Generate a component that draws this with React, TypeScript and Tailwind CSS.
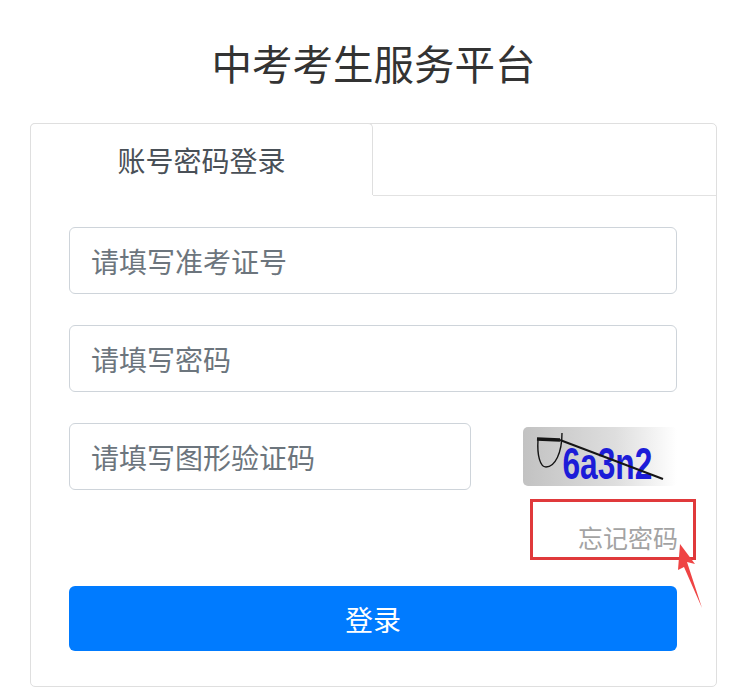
export default function App() {
  return (
    <div className="relative h-[699px] w-[743px] overflow-hidden bg-white font-['Noto_Sans_CJK_SC',sans-serif]">
      <div className="ml-[30px] w-[687px] pt-[35px]">
        <h1 className="h-[88px] text-center text-[40.5px] leading-[56px] font-normal text-[#333333]">
          中考考生服务平台
        </h1>

        <div className="h-[564px] rounded-[5px] border border-[#dfdfdf]">
          <div className="flex h-[72px]">
            <div className="-mt-px -ml-px flex h-[72px] w-[343px] items-center justify-center rounded-t-[5px] border border-b-0 border-[#dfdfdf] bg-white pt-px text-[28px] leading-none text-[#495057]">
              账号密码登录
            </div>
            <div className="flex-1 border-b border-[#e2e2e2]"></div>
          </div>

          <div className="px-[38px] pt-[31px]">
            <div className="flex h-[67px] w-[608px] items-center rounded-[6px] border border-[#ced4da] pl-[21px] text-[28px] text-[#6c757d]">
              请填写准考证号
            </div>
            <div className="mt-[31px] flex h-[67px] w-[608px] items-center rounded-[6px] border border-[#ced4da] pl-[21px] text-[28px] text-[#6c757d]">
              请填写密码
            </div>
            <div className="mt-[31px] flex w-[608px] items-start justify-between">
              <div className="flex h-[67px] w-[402px] items-center rounded-[6px] border border-[#ced4da] pl-[21px] text-[28px] text-[#6c757d]">
                请填写图形验证码
              </div>
              <div className="relative mt-1 flex h-[59px] w-[154px] items-center justify-center overflow-hidden rounded-[5px] bg-gradient-to-r from-[#c2c2c2] via-[#dedede] via-60% to-white">
                <span className="mt-[14px] ml-[15px] font-['Liberation_Sans',sans-serif] text-[44px] leading-none font-bold text-[#1c1cd8] [transform:scaleX(0.72)]">
                  6a3n2
                </span>
                <svg className="absolute inset-0" width="154" height="59" viewBox="0 0 154 59" fill="none" stroke="#151515">
                  <path d="M14 12 L37 13" strokeWidth="3.5" />
                  <path d="M37 13 L140 52" strokeWidth="2" />
                  <path d="M15 13 C14 28 17 40 23 40 C32 40 39 26 39 6" strokeWidth="1.4" />
                </svg>
              </div>
            </div>
            <div className="mt-[30px] flex h-[34px] justify-end text-[25px] leading-[34px] text-[#a3a3a3]">
              忘记密码
            </div>
            <div className="mt-[32px] flex h-[65px] w-[608px] items-center justify-center rounded-[6px] bg-[#007bff] pt-px text-[28px] text-white">
              登录
            </div>
          </div>
        </div>
      </div>

      <div className="absolute top-[499px] left-[530px] h-[61px] w-[166px] border-[3px] border-[#e0393b]"></div>
      <svg className="absolute top-[540px] left-[675px]" width="32" height="72" viewBox="0 0 32 72">
        <path d="M5 4 L20 24 L12 22 L27 68 L9 27 L3 30 Z" fill="#ef4444" />
      </svg>
    </div>
  );
}
